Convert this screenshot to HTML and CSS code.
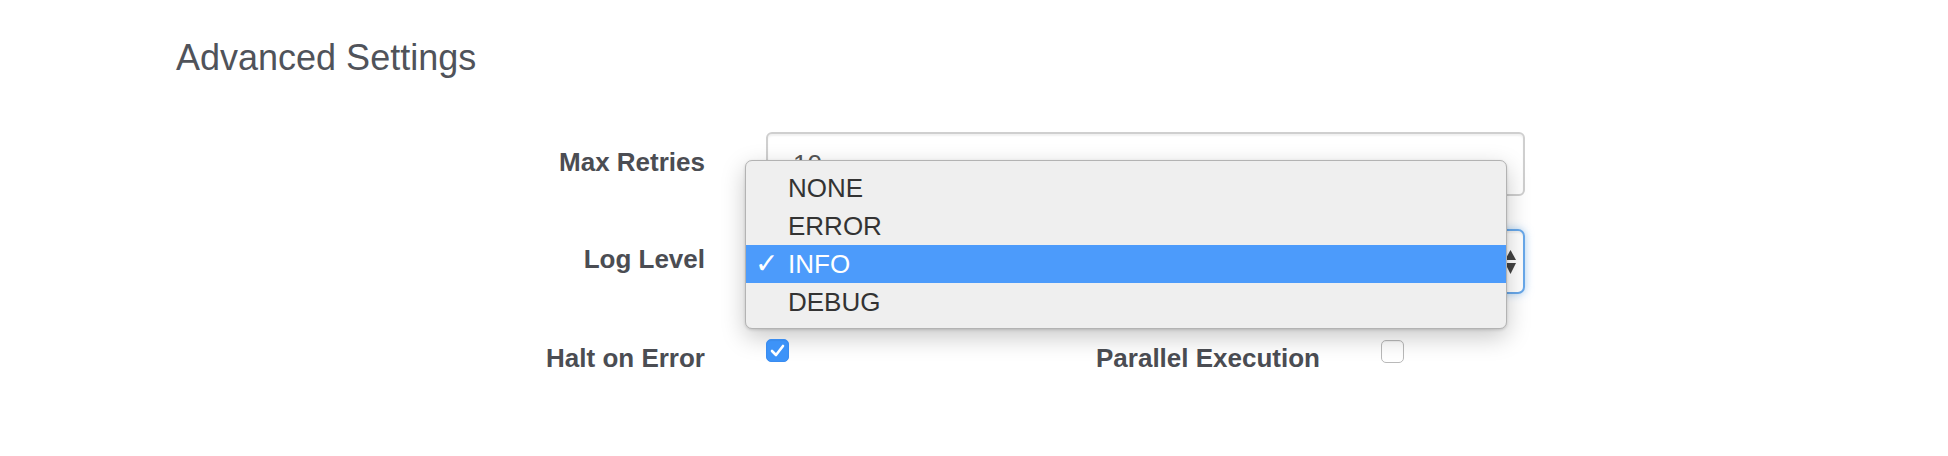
FILE: index.html
```html
<!DOCTYPE html>
<html>
<head>
<meta charset="utf-8">
<link rel="stylesheet" href="styles.css">
</head>
<body>
<div class="page">
  <h2 class="title">Advanced Settings</h2>
  <form class="form">
    <div class="row">
      <label class="label">Max Retries</label>
      <div class="control">
        <input class="input" type="text" value="10">
      </div>
    </div>
    <div class="row">
      <label class="label">Log Level</label>
      <div class="control">
        <div class="select">
          <svg class="arrows" width="11" height="24" viewBox="0 0 11 24"><path d="M5.5 0 L11 10 L0 10 Z" fill="#444"/><path d="M0 13 L11 13 L5.5 24 Z" fill="#444"/></svg>
        </div>
        <ul class="menu">
          <li class="item">NONE</li>
          <li class="item">ERROR</li>
          <li class="item selected"><span class="check">✓</span>INFO</li>
          <li class="item">DEBUG</li>
        </ul>
      </div>
    </div>
    <div class="row row-check">
      <label class="label">Halt on Error</label>
      <div class="check-cell">
        <span class="checkbox checked">
          <svg width="23" height="23" viewBox="0 0 23 23"><path d="M6 12 L10 16 L17 7" fill="none" stroke="#fff" stroke-width="2.6" stroke-linecap="round" stroke-linejoin="round"/></svg>
        </span>
      </div>
      <label class="label label2">Parallel Execution</label>
      <div class="check-cell2">
        <span class="checkbox"></span>
      </div>
    </div>
  </form>
</div>
</body>
</html>
```
FILE: styles.css
```css
* { box-sizing: border-box; }
html, body { margin: 0; padding: 0; background: #fff; }
body {
  font-family: "Liberation Sans", Arial, Helvetica, sans-serif;
  color: #4b4d53;
  width: 1948px;
  height: 456px;
  overflow: hidden;
}
.page { padding-left: 176px; padding-top: 38px; }
.title {
  margin: 0;
  font-size: 36px;
  line-height: 40px;
  font-weight: normal;
  color: #50535a;
}
.form {
  margin: 54px 0 0 -176px;
  display: flex;
  flex-direction: column;
  gap: 33px;
}
.row {
  display: flex;
  align-items: flex-start;
}
.label {
  width: 305px;
  margin-left: 400px;
  margin-right: 61px;
  text-align: right;
  font-weight: bold;
  font-size: 26px;
  line-height: 30px;
  padding-top: 15px;
  color: #4b4d53;
}
.control {
  position: relative;
  width: 759px;
}
.input {
  display: block;
  width: 100%;
  height: 64px;
  border: 2px solid #cfcfcf;
  border-radius: 6px;
  padding: 0 25px;
  font-family: inherit;
  font-size: 26px;
  color: #555;
  background: #fff;
  box-shadow: inset 0 2px 2px rgba(0,0,0,0.06);
  outline: none;
}
.select {
  position: relative;
  height: 65px;
  border: 2px solid #68a8ea;
  border-radius: 7px;
  box-shadow: 0 0 8px rgba(102,170,233,0.55), inset 0 2px 2px rgba(0,0,0,0.06);
  background: #fff;
}
.arrows {
  position: absolute;
  right: 7px;
  top: 19px;
}
.menu {
  position: absolute;
  left: -21px;
  top: -69px;
  width: 762px;
  height: 169px;
  margin: 0;
  padding: 8px 0;
  list-style: none;
  background: #efefef;
  border: 1px solid #b3b3b3;
  border-radius: 7px;
  box-shadow: 0 8px 24px rgba(0,0,0,0.22), 0 1px 3px rgba(0,0,0,0.15);
}
.item {
  position: relative;
  height: 38px;
  line-height: 38px;
  padding-left: 42px;
  font-size: 26px;
  color: #333;
}
.item.selected {
  background: #4c9bfb;
  color: #fff;
}
.check {
  position: absolute;
  left: 9px;
  top: 0;
  font-family: "DejaVu Sans", sans-serif;
  font-size: 28px;
  font-weight: bold;
}
.row-check .label { padding-top: 16px; }
.check-cell {
  width: 250px;
  padding-top: 12px;
}
.label2 {
  margin-left: 0;
  width: 304px;
}
.check-cell2 { padding-top: 13px; }
.checkbox {
  display: block;
  width: 23px;
  height: 23px;
  border: 1.5px solid #b9b9b9;
  border-radius: 5px;
  background: #fff;
  box-shadow: inset 0 1px 1px rgba(0,0,0,0.05);
}
.checkbox.checked {
  background: #3d93f8;
  border-color: #3a8cf0;
  position: relative;
}
.checkbox.checked svg { position: absolute; left: -1.5px; top: -1.5px; }
```
